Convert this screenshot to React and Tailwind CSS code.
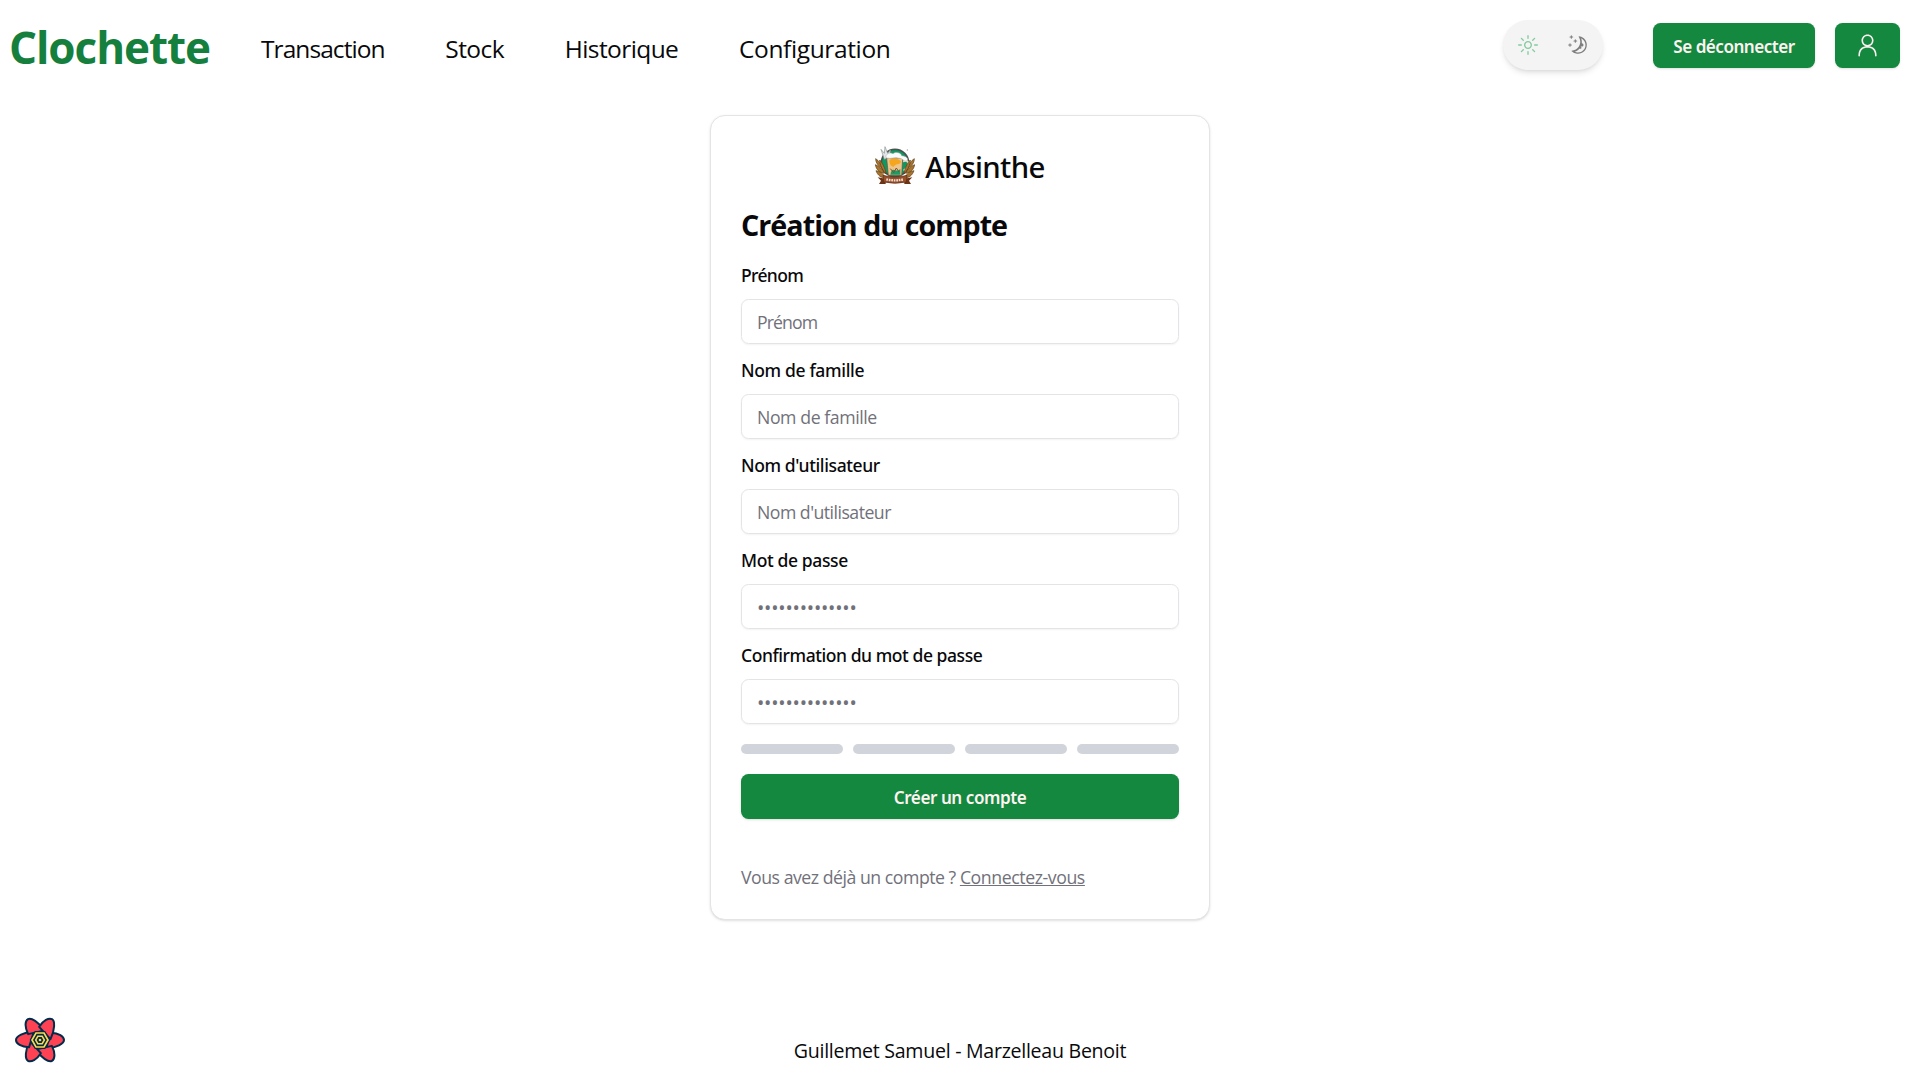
import React from "react";
import { RxSun, RxMoon, RxPerson } from "react-icons/rx";

const FIELDS = [
  { label: "Prénom", placeholder: "Prénom", labelClass: "tracking-[-0.65px]", inputClass: "pt-px placeholder:tracking-[-0.9px]" },
  { label: "Nom de famille", placeholder: "Nom de famille", labelClass: "tracking-[-0.34px]", inputClass: "pt-px placeholder:tracking-[-0.42px]" },
  { label: "Nom d'utilisateur", placeholder: "Nom d'utilisateur", labelClass: "tracking-[-0.38px]", inputClass: "pt-px placeholder:tracking-[-0.52px]" },
  { label: "Mot de passe", placeholder: "••••••••••••••", labelClass: "tracking-[-0.38px]", inputClass: "pt-[2px] placeholder:text-[19.5px] placeholder:tracking-[-0.22px]" },
  { label: "Confirmation du mot de passe", placeholder: "••••••••••••••", labelClass: "tracking-[-0.44px]", inputClass: "pt-[2px] placeholder:text-[19.5px] placeholder:tracking-[-0.22px]" },
];

const NAV = [
  { name: "Transaction", className: "tracking-[-0.93px]" },
  { name: "Stock", className: "tracking-[-0.56px]" },
  { name: "Historique", className: "tracking-[-0.58px]" },
  { name: "Configuration", className: "tracking-[-0.37px]" },
];

function AbsintheLogo({ className }) {
  return (
    <svg viewBox="0 0 120 120" className={className} aria-hidden="true">
      <circle cx="60" cy="51" r="41" fill="#0d9a62" stroke="#4b514e" strokeWidth="5" />
      <path d="M28 40 L18 10 L28 22 L30 2 L38 22 L46 12 L44 34 Z" fill="#e3e6e6" stroke="#8b9292" strokeWidth="2" />
      <circle cx="97" cy="12" r="2" fill="#9aa09e" />
      <path d="M84 46 C104 38 106 62 86 74" fill="none" stroke="#e9dcc0" strokeWidth="6" />
      <path d="M35 36 H83 L80 88 H40 Z" fill="#ecc58c" stroke="#6f5136" strokeWidth="2" />
      <path d="M44 42 C56 34 74 38 78 48 C72 58 62 52 56 62 C48 62 42 54 44 42 Z" fill="#f5a61d" />
      <path d="M48 78 C56 60 62 84 76 68 L76 86 L46 86 Z" fill="#1b9c63" />
      <path d="M46 68 L56 80 L64 66 L72 78" fill="none" stroke="#8a4b2a" strokeWidth="3" />
      <path d="M34 36 C28 24 46 18 54 23 C62 16 78 20 80 29 C94 30 102 38 96 45 C86 48 84 38 74 37 C60 32 48 40 34 36 Z" fill="#fafafa" stroke="#a4aaa8" strokeWidth="1.500" />
      <g fill="#a9742c" stroke="#5f3d18" strokeWidth="2">
        <path d="M2 38 C12 44 20 56 22 66 C12 62 2 52 2 38 Z" />
        <path d="M1 56 C12 60 24 70 28 82 C14 80 4 72 1 56 Z" />
        <path d="M3 74 C16 76 26 84 32 96 C18 96 8 88 3 74 Z" />
        <path d="M14 42 C22 50 31 66 33 84 C22 72 14 56 14 42 Z" />
        <path d="M118 38 C108 44 100 56 98 66 C108 62 118 52 118 38 Z" />
        <path d="M119 56 C108 60 96 70 92 82 C106 80 116 72 119 56 Z" />
        <path d="M117 74 C104 76 94 84 88 96 C102 96 112 88 117 74 Z" />
        <path d="M106 42 C98 50 89 66 87 84 C98 72 106 56 106 42 Z" />
      </g>
      <path d="M8 94 L32 98 L32 114 L12 114 L18 104 Z" fill="#6d3417" />
      <path d="M112 94 L88 98 L88 114 L108 114 L102 104 Z" fill="#6d3417" />
      <path d="M24 88 Q60 98 96 88 L94 108 Q60 116 26 108 Z" fill="#98502b" stroke="#5c2c13" strokeWidth="2" />
      <path d="M34 100 Q60 106 86 100" fill="none" stroke="#f0dfd2" strokeWidth="7" strokeDasharray="5 2.500" />
    </svg>
  );
}

function QueryFlower({ className }) {
  return (
    <svg viewBox="-78 -72 156 144" className={className} aria-hidden="true">
      <g fill="#ff4154" stroke="#002c4b" strokeWidth="6" strokeLinejoin="round">
        {[0, 60, 120, 180, 240, 300].map((a) => (
          <path key={a} transform={`rotate(${a})`} d="M33 -22 C56 -21 72 -11 72 0 C72 11 50 23 18 26 Z" />
        ))}
      </g>
      <path d="M31 0 L15.500 27 H-15.500 L-31 0 L-15.500 -27 H15.500 Z" fill="#002c4b" />
      <path d="M24 0 L12 21 H-12 L-24 0 L-12 -21 H12 Z" fill="none" stroke="#ffd94c" strokeWidth="5" />
      <path d="M13 0 L6.500 11 H-6.500 L-13 0 L-6.500 -11 H6.500 Z" fill="none" stroke="#ffd94c" strokeWidth="4.500" />
      <circle r="4" fill="#ffd94c" />
    </svg>
  );
}

function Header() {
  return (
    <header className="flex h-[90px] items-start justify-between pr-5 pl-[9px]">
      <div className="flex items-start">
        <div className="w-[252px] pt-[17px] text-[44px] leading-[60px] font-bold tracking-[-1.05px] text-[#15803d]">Clochette</div>
        <nav className="flex gap-[60.7px] pt-[29px] text-[24.5px] leading-[40px]">
          {NAV.map((n) => (
            <a key={n.name} className={n.className}>{n.name}</a>
          ))}
        </nav>
      </div>
      <div className="flex items-start">
        <div className="mt-5 mr-[50px] flex h-[50px] w-[100px] items-center justify-between rounded-full bg-[#f4f4f4] px-[15px] shadow-md">
          <RxSun className="size-5 text-[#16a34a] opacity-50" />
          <RxMoon className="size-5 text-[#0a0a0a] opacity-50" />
        </div>
        <button className="mt-[23px] mr-5 h-[45px] w-[162px] rounded-[7.5px] bg-[#14883e] pt-[3px] font-['Noto_Sans'] text-[17.1px] font-semibold tracking-[-0.5px] text-[#fdf2f2] shadow-sm">
          Se déconnecter
        </button>
        <button className="mt-[23px] flex h-[45px] w-[65px] items-center justify-center rounded-[7.5px] bg-[#14883e] text-[#fdf2f2] shadow-sm">
          <RxPerson className="size-[25px]" />
        </button>
      </div>
    </header>
  );
}

function SignUpCard() {
  return (
    <main className="mx-auto mt-[25px] h-[805px] w-[500px] rounded-[15px] border border-[#e4e4e7] bg-white px-[30px] pt-[30px] shadow">
      <div className="flex h-10 items-center justify-center gap-[10px]">
        <AbsintheLogo className="size-10" />
        <span className="pt-[2px] font-['Noto_Sans'] text-[29.4px] leading-10 font-medium tracking-[-0.66px]">Absinthe</span>
      </div>
      <h1 className="mt-[19px] mb-[18px] text-[28.7px] leading-10 font-bold tracking-[-0.97px]">Création du compte</h1>
      <form className="flex flex-col">
        {FIELDS.map((f) => (
          <label key={f.label} className="mb-[14px] flex flex-col gap-[11px]">
            <span className={`font-['Noto_Sans'] text-[17.5px] leading-[25px] font-medium ${f.labelClass}`}>{f.label}</span>
            <input
              placeholder={f.placeholder}
              className={`h-[45px] w-full rounded-[7.5px] border border-[#e4e4e7] px-[15px] text-[17.7px] shadow-xs placeholder:text-[#71717a] ${f.inputClass}`}
            />
          </label>
        ))}
        <div className="mt-[6px] grid grid-cols-4 gap-[10px]">
          {[0, 1, 2, 3].map((i) => (
            <div key={i} className="h-[10px] rounded-full bg-[#d1d5db]" />
          ))}
        </div>
        <button type="button" className="mt-5 h-[45px] rounded-[7.5px] bg-[#14883e] pt-[3px] font-['Noto_Sans'] text-[17.1px] font-semibold tracking-[-0.46px] text-[#fdf2f2] shadow-sm">
          Créer un compte
        </button>
      </form>
      <p className="mt-[46px] text-[17.7px] leading-[25px] tracking-[-0.48px] text-[#71717a]">
        Vous avez déjà un compte ? <a className="tracking-[-0.42px] underline">Connectez-vous</a>
      </p>
    </main>
  );
}

export default function App() {
  return (
    <div className="relative flex h-[1080px] w-[1920px] flex-col overflow-hidden bg-white font-['Open_Sans','Noto_Sans',sans-serif] text-[#09090b]">
      <Header />
      <SignUpCard />
      <footer className="mt-auto pb-[14px] text-center text-[19.6px] leading-[30px] tracking-[-0.28px]">Guillemet Samuel - Marzelleau Benoit</footer>
      <QueryFlower className="absolute bottom-[16px] left-[14px] h-12 w-[52px]" />
    </div>
  );
}
